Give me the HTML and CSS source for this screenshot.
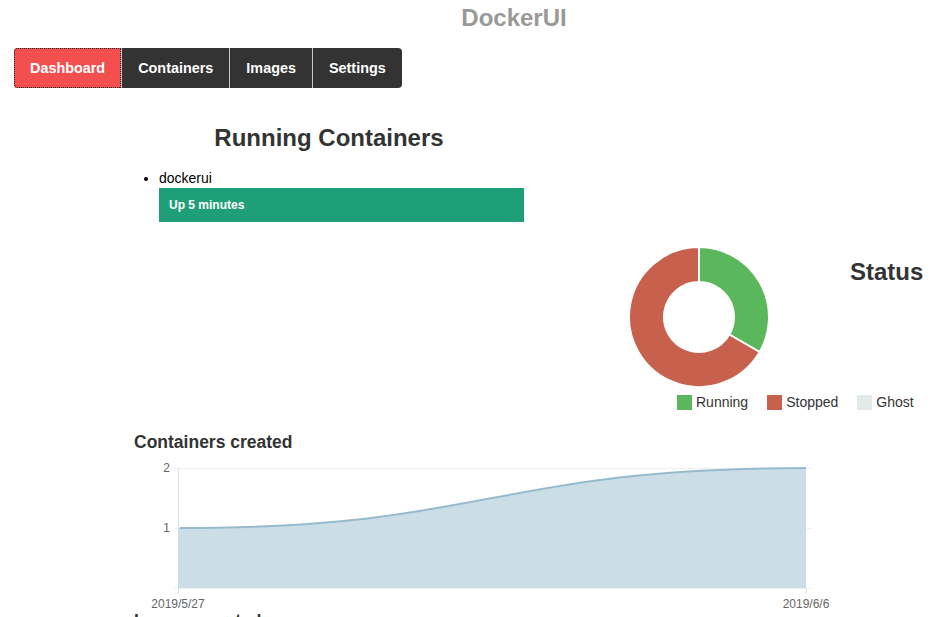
FILE: index.html
```html
<!DOCTYPE html>
<html lang="en">
<head>
<meta charset="utf-8">
<title>DockerUI</title>
<link rel="stylesheet" href="styles.css">
</head>
<body>
<header class="top">
  <h1 class="brand">DockerUI</h1>
</header>
<nav class="nav">
  <a class="nav-item active" href="#">Dashboard</a>
  <a class="nav-item" href="#">Containers</a>
  <a class="nav-item" href="#">Images</a>
  <a class="nav-item" href="#">Settings</a>
</nav>
<main class="main">
  <section class="running">
    <h2 class="running-title">Running Containers</h2>
    <ul class="clist">
      <li class="citem">
        <span class="cname">dockerui</span>
        <div class="uptime">Up 5 minutes</div>
      </li>
    </ul>
  </section>

  <section class="status">
    <div class="status-row">
      <svg class="donut" width="140" height="140" viewBox="0 0 140 140">
        <path d="M70 0 A70 70 0 0 1 130.62 105 L100.31 87.5 A35 35 0 0 0 70 35 Z" fill="#5bb75b" stroke="#fff" stroke-width="2"/>
        <path d="M130.62 105 A70 70 0 1 1 70 0 L70 35 A35 35 0 1 0 100.31 87.5 Z" fill="#c7604c" stroke="#fff" stroke-width="2"/>
      </svg>
      <h2 class="status-title">Status</h2>
    </div>
    <ul class="legend">
      <li class="legend-item"><span class="swatch sw-running"></span>Running</li>
      <li class="legend-item"><span class="swatch sw-stopped"></span>Stopped</li>
      <li class="legend-item"><span class="swatch sw-ghost"></span>Ghost</li>
    </ul>
  </section>

  <section class="created">
    <h3 class="chart-title">Containers created</h3>
    <svg class="chart" width="700" height="151" viewBox="0 0 700 151">
      <g stroke="#efefef" stroke-width="1">
        <line x1="40" y1="10.5" x2="678" y2="10.5"/>
        <line x1="40" y1="70.5" x2="678" y2="70.5"/>
        <line x1="40" y1="130.5" x2="678" y2="130.5"/>
      </g>
      <g stroke="#e2e2e2" stroke-width="1">
        <line x1="44.5" y1="10" x2="44.5" y2="136"/>
        <line x1="672.5" y1="130" x2="672.5" y2="136"/>
      </g>
      <path d="M44 70 C358 70 358 10 672 10 L672 130 L44 130 Z" fill="#cbdde6"/>
      <path d="M46 70 C358 70 358 10 672 10" fill="none" stroke="#97bbcd" stroke-width="2"/>
      <g class="axis-text">
        <text x="36" y="14" text-anchor="end">2</text>
        <text x="36" y="74" text-anchor="end">1</text>
        <text x="44" y="149.5" text-anchor="middle">2019/5/27</text>
        <text x="672" y="149.5" text-anchor="middle">2019/6/6</text>
      </g>
    </svg>
    <h3 class="chart-title next">Images created</h3>
  </section>
</main>
</body>
</html>
```

FILE: styles.css
```css
html {
  overflow: hidden;
}

body {
  margin: 0;
  font-family: "Liberation Sans", Arial, sans-serif;
  font-size: 14px;
  color: #333;
  background: #fff;
}

.top {
  padding-left: 87px;
  text-align: center;
}

.brand {
  margin: 4px 0 0;
  font-size: 24px;
  line-height: 28px;
  font-weight: bold;
  color: #999;
}

.nav {
  display: inline-flex;
  margin: 16px 0 0 14px;
  background: #333;
  border-radius: 4px;
}

.nav-item {
  display: block;
  height: 40px;
  line-height: 40px;
  padding: 0 16px;
  font-size: 14.4px;
  font-weight: bold;
  color: #fff;
  text-decoration: none;
  border-left: 1px solid #c8c8c8;
}

.nav-item:first-child {
  border-left: 0;
  border-radius: 4px 0 0 4px;
}

.nav-item:last-child {
  border-radius: 0 4px 4px 0;
}

.nav-item.active {
  background: #f34f4f;
  outline: 1px dotted #222;
  outline-offset: -1px;
}

.main {
  margin-left: 134px;
}

.running {
  width: 390px;
  margin-top: 36px;
}

.running-title {
  margin: 0;
  font-size: 24px;
  line-height: 28px;
  text-align: center;
  color: #333;
}

.clist {
  margin: 16px 0 0;
  padding-left: 25px;
  color: #000;
}

.cname {
  display: block;
  line-height: 20px;
}

.uptime {
  height: 34px;
  line-height: 34px;
  padding-left: 10px;
  background: #1f9f78;
  color: #fff;
  font-size: 12px;
  font-weight: bold;
}

.status {
  margin: 25px 0 0 495px;
}

.status-row {
  display: flex;
  align-items: flex-start;
}

.donut {
  display: block;
}

.status-title {
  margin: 11px 0 0 81px;
  font-size: 24px;
  line-height: 28px;
  color: #333;
}

.legend {
  display: flex;
  gap: 19px;
  margin: 7px 0 0 48px;
  padding: 0;
  list-style: none;
}

.legend-item {
  display: flex;
  align-items: center;
  gap: 4px;
  line-height: 16px;
  font-size: 14px;
  color: #333;
}

.swatch {
  width: 15px;
  height: 15px;
}

.sw-running { background: #5bb75b; }
.sw-stopped { background: #c7604c; }
.sw-ghost { background: #e2eae9; }

.chart-title {
  margin: 22px 0 0;
  font-size: 17.5px;
  line-height: 20px;
  color: #333;
}

.chart-title.next {
  margin-top: 2px;
}

.chart {
  display: block;
  margin-top: 6px;
}

.axis-text {
  font-family: "Liberation Sans", Arial, sans-serif;
  font-size: 12px;
  fill: #666;
}
```
